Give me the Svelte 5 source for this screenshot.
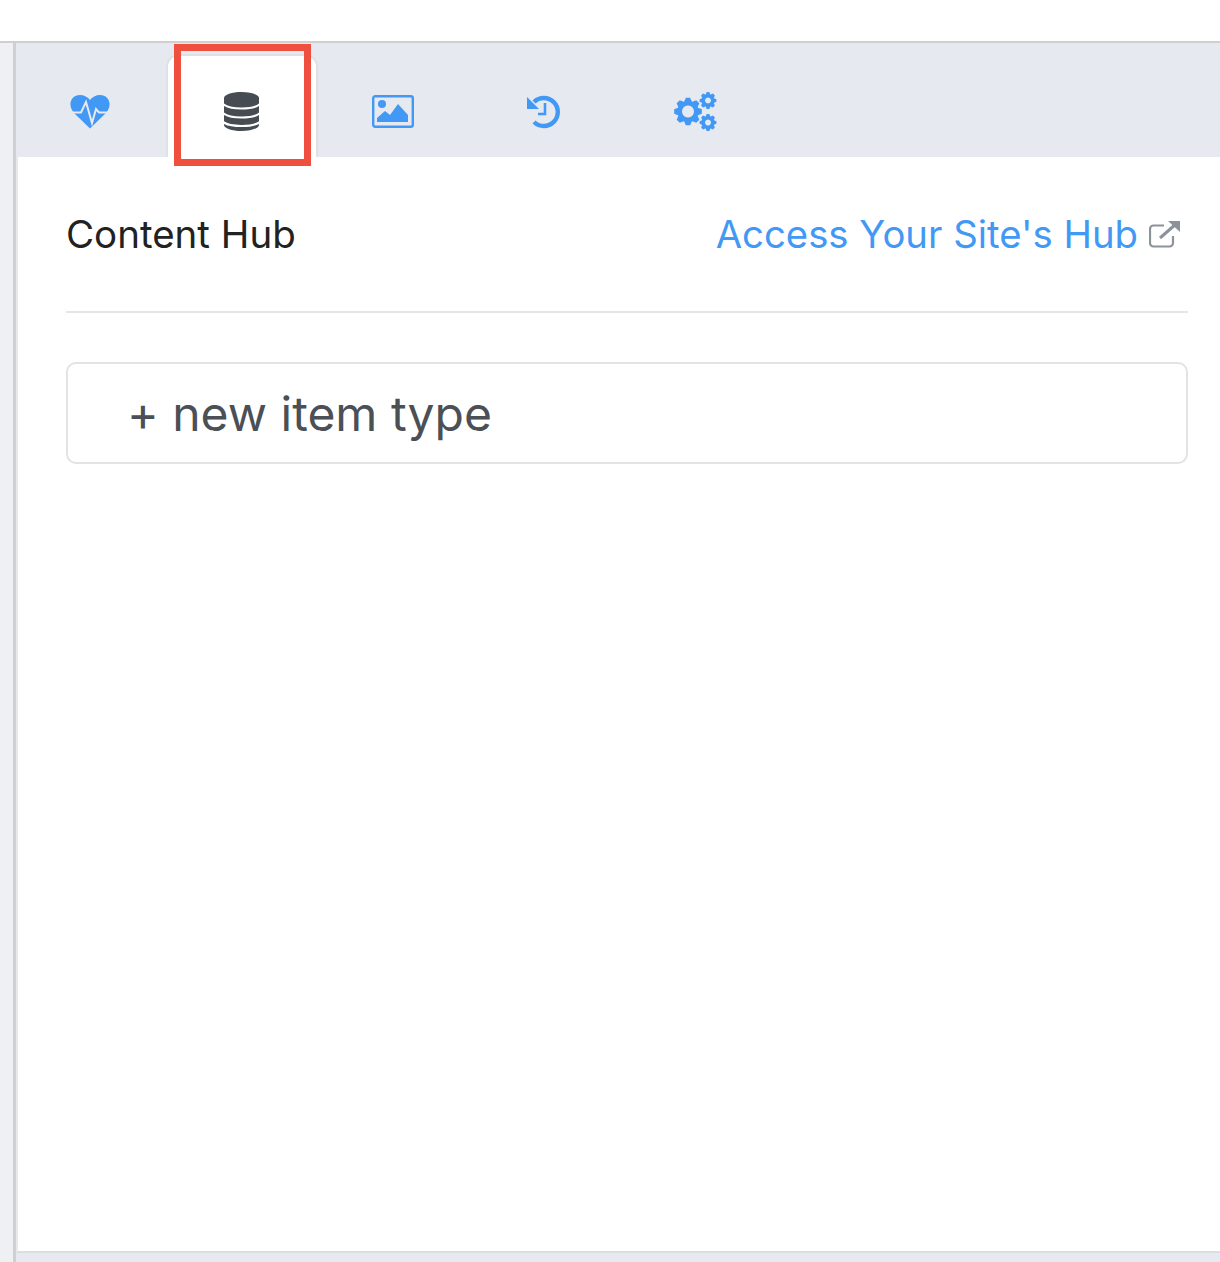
<script lang="ts">
  const BLUE = '#4299f5';

  // cog outline: teeth alternate between outer and inner radius
  function gear(cx: number, cy: number, r: number, teeth: number) {
    const inner = r * 0.76;
    const step = (Math.PI * 2) / teeth;
    const pts: string[] = [];
    for (let i = 0; i < teeth; i++) {
      const a = i * step - Math.PI / 2;
      const spots: [number, number][] = [
        [a - step * 0.46, inner],
        [a - step * 0.2, r],
        [a + step * 0.2, r],
        [a + step * 0.46, inner],
      ];
      for (const [t, rad] of spots) {
        pts.push(`${(cx + Math.cos(t) * rad).toFixed(2)} ${(cy + Math.sin(t) * rad).toFixed(2)}`);
      }
    }
    return 'M' + pts.join('L') + 'Z';
  }

  const tabs = ['health', 'content', 'media', 'history', 'settings'];
</script>

<div class="page">
  <div class="topbar"></div>
  <div class="shell">
    <div class="rail"></div>
    <div class="main">
      <nav class="tabs">
        {#each tabs as tab}
          <button type="button" class="tab" class:active={tab === 'content'} aria-label={tab}>
            {#if tab === 'health'}
              <svg width="40" height="34" viewBox="0 0 40 34">
                <path fill={BLUE} d="M20 33.5 4 18C-3 10 1 0 10 0c4 0 8 2 10 5 2-3 6-5 10-5 9 0 13 10 6 18Z" />
                <path fill="none" stroke="#e6e9ef" stroke-width="2" d="M0 17.5H11L16 7l6 21 4-14 3 3.5H40" />
              </svg>
            {:else if tab === 'content'}
              <svg width="35" height="39" viewBox="0 0 35 39">
                <path fill="#474c52" d="M0 6C0 2.700 7.800 0 17.500 0S35 2.700 35 6V33c0 3.300-7.800 6-17.500 6S0 36.300 0 33Z" />
                <g fill="none" stroke="#fff" stroke-width="2.200">
                  <path d="M-1 12c4 3.500 11 4.500 18.500 4.500S32 15.500 36 12" />
                  <path d="M-1 21c4 3.500 11 4.500 18.500 4.500S32 24.500 36 21" />
                  <path d="M-1 30c4 3 11 4 18.500 4S32 33 36 30" />
                </g>
              </svg>
            {:else if tab === 'media'}
              <svg width="42" height="33" viewBox="0 0 42 33">
                <rect x="1.200" y="1.200" width="39.600" height="30.600" rx="2" fill="none" stroke={BLUE} stroke-width="2.400" />
                <circle cx="10" cy="9" r="4" fill={BLUE} />
                <path fill={BLUE} d="M5 27V23L13 16 18 20 26 9 36 20V27Z" />
              </svg>
            {:else if tab === 'history'}
              <svg width="34" height="34" viewBox="0 0 34 34">
                <path fill="none" stroke={BLUE} stroke-width="4.400" d="M7 7A14 14 0 1 1 7 27" />
                <path fill={BLUE} d="M0 2V14H12Z" />
                <path fill="none" stroke={BLUE} stroke-width="2.600" d="M18 8V19H11" />
              </svg>
            {:else}
              <svg width="43" height="39" viewBox="0 0 43 39">
                <path fill={BLUE} fill-rule="evenodd" d="{gear(14, 19.500, 14, 8)}M14 13.500a6 6 0 1 0 .01 0Z" />
                <path fill={BLUE} fill-rule="evenodd" d="{gear(34, 8.500, 8.500, 8)}M34 5.500a3 3 0 1 0 .01 0Z" />
                <path fill={BLUE} fill-rule="evenodd" d="{gear(34, 30.500, 8.500, 8)}M34 27.500a3 3 0 1 0 .01 0Z" />
              </svg>
            {/if}
            {#if tab === 'content'}<span class="callout"></span>{/if}
          </button>
        {/each}
      </nav>

      <section class="panel">
        <header class="head">
          <h2>Content Hub</h2>
          <a href="#hub">
            Access Your Site's Hub
            <svg width="31" height="27" viewBox="0 0 31 27">
              <path fill="none" stroke="#8b9299" stroke-width="2.200" d="M24 15v7a3.500 3.500 0 0 1-3.500 3.500H4.500A3.500 3.500 0 0 1 1 22V8a3.500 3.500 0 0 1 3.500-3.500H15" />
              <path fill="none" stroke="#8b9299" stroke-width="3" d="M11 17 27 3" />
              <path fill="#8b9299" d="M19 0H31V11Z" />
            </svg>
          </a>
        </header>
        <button type="button" class="add">+ new item type</button>
      </section>
    </div>
  </div>
</div>

<style>
  :global(body) {
    margin: 0;
    background: #fff;
  }

  .page {
    display: flex;
    flex-direction: column;
    height: 1262px;
    overflow: hidden;
    font-family: Inter, "Liberation Sans", sans-serif;
  }

  .topbar {
    height: 41px;
    flex: none;
    background: #fff;
    border-bottom: 2px solid #cfcfcf;
  }

  .shell {
    flex: 1;
    display: flex;
    min-height: 0;
  }

  .rail {
    width: 13px;
    flex: none;
    background: #eef0f4;
    border-right: 3px solid #d0d0d0;
  }

  .main {
    flex: 1;
    display: flex;
    flex-direction: column;
    background: #e6e9ef;
    padding-bottom: 9px;
  }

  .tabs {
    display: flex;
    height: 114px;
    flex: none;
    margin-left: -1px;
    padding-top: 11px;
    box-sizing: border-box;
  }

  .tab {
    position: relative;
    width: 151.300px;
    flex: none;
    display: flex;
    align-items: center;
    justify-content: center;
    padding: 10px 1px 0 0;
    background: none;
    border: 2px solid transparent;
    border-bottom: 0;
    border-radius: 13px 13px 0 0;
  }

  .tab.active {
    background: #fff;
    border-color: #dfe1e5;
  }

  .callout {
    position: absolute;
    left: 6px;
    top: -12px;
    width: 137px;
    height: 122px;
    box-sizing: border-box;
    border: 7.500px solid #ee4f3e;
  }

  .panel {
    flex: 1;
    padding: 0 32px 0 48px;
    background: #fff;
    border-left: 2px solid #e8e8ea;
    border-bottom: 2px solid #dcdde0;
  }

  .head {
    display: flex;
    justify-content: space-between;
    align-items: center;
    height: 156px;
    padding-right: 8px;
    border-bottom: 2px solid #e6e6e6;
    box-sizing: border-box;
  }

  .head h2 {
    margin: 0;
    font-size: 38.500px;
    font-weight: 400;
    color: #222;
  }

  .head a {
    display: flex;
    align-items: center;
    gap: 11px;
    font-size: 38.300px;
    color: #4299f5;
    text-decoration: none;
  }

  .add {
    display: block;
    width: 100%;
    height: 102px;
    margin-top: 49px;
    padding: 0 0 0 59px;
    text-align: left;
    font: inherit;
    font-size: 48px;
    color: #4a5056;
    background: #fff;
    border: 2px solid #e3e3e3;
    border-radius: 10px;
  }
</style>
